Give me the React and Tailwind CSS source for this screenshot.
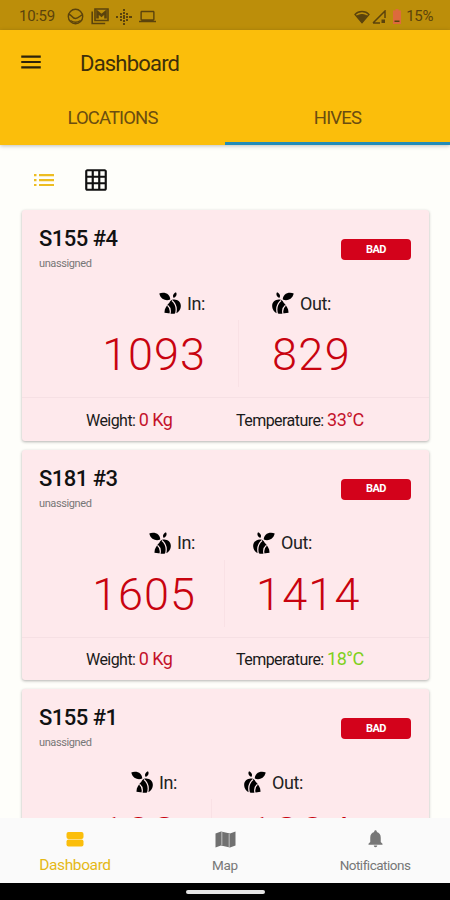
import React from 'react';
import { MdMenu, MdGridOn, MdLaptop, MdNotifications } from 'react-icons/md';

const hives = [
  {
    name: 'S155 #4', incoming: '1093', outgoing: '829', temperature: '33°C', tempClass: 'text-[#c4122b]',
    inClass: 'w-[183px]', leftGap: 'w-[34px]', rightGap: 'w-[33px]', outClass: 'tracking-[1.4px]',
  },
  {
    name: 'S181 #3', incoming: '1605', outgoing: '1414', temperature: '18°C', tempClass: 'text-[#7ed01c]',
    inClass: 'w-[173px]', leftGap: 'w-[30px]', rightGap: 'w-[28px]', outClass: 'tracking-[1.2px] pl-[3px]',
  },
  {
    name: 'S155 #1', incoming: '103', outgoing: '1304', temperature: '33°C', tempClass: 'text-[#c4122b]',
    inClass: 'w-[155px]', leftGap: 'w-[35px]', rightGap: 'w-[32px]', outClass: 'tracking-[1.2px] pl-[4px]',
  },
];

const BeeIcon = ({ className = '' }) => (
  <svg width="22" height="22" viewBox="0 0 22 22" className={className}>
    <path d="M0.300 1.600C2.500.200 7 .300 9.300 2.700 10.800 4.300 11.300 5.900 11.200 7.600 8 9 2 8.600.300 1.600Z" fill="currentColor" />
    <path d="M17 .300C18.300 2 17.600 4.600 14.800 6 13.200 4.500 14 1.600 17 .300Z" fill="currentColor" />
    <path d="M14.500 7.500C19 7.200 22.200 10.500 21.800 14.500 21.500 18.500 18.600 21.500 14.800 21.700 11.500 21.900 8.200 21 5.500 20.700 5.300 17 7.500 13.800 10.500 10.600 11.200 8.800 12.500 7.600 14.500 7.500Z" fill="currentColor" />
    <path d="M8.500 13.200C11.300 15.500 12 18.500 10.800 22.500M13 8.500C17 12 18.300 16 16.500 22" fill="none" stroke="#fee9ec" strokeWidth="1.200" />
  </svg>
);

const ListIcon = () => (
  <svg width="20" height="12" viewBox="0 0 20 12" fill="#edbd22">
    <path d="M0 0h2.500v2.200H0zM0 5h2.500v2.200H0zM0 10h2.500v2H0zM5 0h15v2.200H5zM5 5h15v2.200H5zM5 10h15v2H5z" />
  </svg>
);

const StatusBar = () => (
  <div className="h-[30px] shrink-0 bg-[#bc8e0a] text-[#5b430c] flex items-center justify-between pl-[19px] pr-[17px] pt-[3px]">
    <div className="flex items-center">
      <span className="w-[48px] text-[15px] tracking-[-0.3px]">10:59</span>
      <svg width="17" height="17" viewBox="0 0 17 17" fill="none" stroke="currentColor" strokeWidth="1.400">
        <circle cx="8.500" cy="8.500" r="7.200" />
        <path d="M1.800 6.500C4.500 6 5 10.500 8.500 10.500S13 7 15.500 7M3.500 12.500c3 2 7 2 10 0" />
      </svg>
      <svg width="18" height="17" viewBox="0 0 18 17" className="ml-[7px]" fill="none" stroke="currentColor" strokeWidth="1.600">
        <path d="M1.200 3.500v12h13" />
        <path d="M4 1h13v11.500H4z" />
        <path d="M6.500 10.500V4l4 3.500 4-3.500v6.500" strokeWidth="2.600" />
      </svg>
      <svg width="16" height="16" viewBox="0 0 16 16" className="ml-[7px]" fill="currentColor">
        <path d="M7 0h2v2H7zM7 3h2v2H7zM7 6h2v4H7zM7 11h2v2H7zM7 14h2v2H7zM4 4h2v2H4zM4 7h2v2H4zM4 10h2v2H4zM10 4h2v2h-2zM10 7h2v2h-2zM10 10h2v2h-2zM13 7h3v2h-3zM0 7h2v2H0z" />
      </svg>
      <MdLaptop size={17} className="ml-[7px]" />
    </div>
    <div className="flex items-center">
      <svg width="16" height="14" viewBox="0 0 16 14" fill="none" stroke="currentColor">
        <path d="M1 4.500C4.500.5 11.500.5 15 4.500L8 12.800Z" strokeWidth="1.300" />
        <path d="M3 6c3-2 7-2 10 0l-5 6.500z" fill="currentColor" />
      </svg>
      <svg width="14" height="14" viewBox="0 0 14 14" className="ml-[2px]">
        <path d="M1 13 13 1v7M1 13h7" fill="none" stroke="currentColor" strokeWidth="1.500" />
        <path d="M9.500 9.500h3.500V13H9.500z" fill="currentColor" />
      </svg>
      <svg width="8" height="15" viewBox="0 0 8 15" className="ml-[7px]">
        <path d="M2.500 0h3v1.500H8V15H0V1.500h2.500z" fill="#dd6a3c" />
        <path d="M1.500 11.500h5V13h-5z" fill="#5b430c" />
      </svg>
      <span className="ml-[5px] text-[15px] tracking-[-0.4px]">15%</span>
    </div>
  </div>
);

const Header = () => (
  <header className="h-[115px] shrink-0 bg-[#fbbe0b] shadow-[0_1px_4px_rgba(0,0,0,0.25)] flex flex-col">
    <div className="h-[64px] flex items-center pl-[18px]">
      <MdMenu size={26} className="text-[#2d230a]" />
      <h1 className="ml-[36px] pt-[3px] text-[22px] leading-none tracking-[-0.8px] text-[#3e300a]">Dashboard</h1>
    </div>
    <div className="flex-1 flex text-[18.500px] text-[#6b4d10]">
      <div className="flex-1 flex items-center justify-center tracking-[-0.9px] border-b-[3px] border-transparent pt-[2px]">LOCATIONS</div>
      <div className="flex-1 flex items-center justify-center tracking-[-0.8px] border-b-[3px] border-[#238cb8] pt-[2px]">HIVES</div>
    </div>
  </header>
);

const HiveCard = ({ hive }) => (
  <div className="h-[230.5px] shrink-0 rounded-[3px] bg-[#fee9ec] shadow-[0_1px_3px_rgba(0,0,0,0.3)] flex flex-col">
    <div className="h-[80px] flex justify-between pl-[17px] pr-[18px]">
      <div className="pt-[17px]">
        <h2 className="text-[22px] leading-[24px] tracking-[-0.5px] font-medium text-[#111]">{hive.name}</h2>
        <p className="mt-[6px] text-[11px] leading-[14px] tracking-[-0.4px] text-[#777]">unassigned</p>
      </div>
      <span className="mt-[29px] w-[70px] h-[21px] rounded-[4px] bg-[#d3021b] text-white text-[11px] font-bold tracking-[-0.6px] flex items-center justify-center pt-px">
        BAD
      </span>
    </div>
    <div className="h-[107px] shrink-0 flex">
      <div className={`${hive.inClass} flex flex-col items-end`}>
        <div className="h-[26px] flex items-center gap-[6px] text-[18px] tracking-[-0.4px] text-[#222]">
          <BeeIcon className="text-black" />
          <span>In:</span>
        </div>
        <span className="mt-[13px] -mr-px text-[45px] leading-[52px] tracking-[1px] text-[#c8030f] font-light">{hive.incoming}</span>
      </div>
      <div className={`${hive.leftGap} mt-[30px] mb-[10px] border-r border-[#f9e1e5]`} />
      <div className={`${hive.rightGap} shrink-0`} />
      <div className="flex flex-col items-start">
        <div className="h-[26px] flex items-center gap-[6px] text-[18px] tracking-[-0.4px] text-[#222]">
          <BeeIcon className="text-black -scale-x-100" />
          <span>Out:</span>
        </div>
        <span className={`mt-[13px] text-[45px] leading-[52px] text-[#c8030f] font-light ${hive.outClass}`}>{hive.outgoing}</span>
      </div>
    </div>
    <div className="flex-1 flex items-center border-t border-[#f6e0e4] text-[16px] tracking-[-0.55px] text-[#1a1a1a]">
      <div className="w-[214px] pl-[64px] whitespace-nowrap">
        Weight: <span className="text-[18px] text-[#c4122b]">0 Kg</span>
      </div>
      <div className="whitespace-nowrap">
        Temperature: <span className={`text-[18px] ${hive.tempClass}`}>{hive.temperature}</span>
      </div>
    </div>
  </div>
);

const BottomNav = () => (
  <nav className="h-[65px] shrink-0 bg-[#fafafa] flex text-[#777]">
    <div className="flex-1 flex flex-col items-center text-[#e5b816]">
      <svg width="18" height="16" viewBox="0 0 18 16" className="mt-[14px]" fill="#fbbe0b">
        <rect x="0.500" width="17" height="7" rx="2" />
        <rect x="0.500" y="7.500" width="17" height="7" rx="2" />
      </svg>
      <span className="mt-[8px] text-[15.500px] leading-[18px] tracking-[-0.4px]">Dashboard</span>
    </div>
    <div className="flex-1 flex flex-col items-center">
      <svg width="21" height="17" viewBox="0 0 21 17" className="mt-[13px]">
        <path d="M0.500 2.500 6 .5l9 2 5.500-2v14l-5.500 2-9-2-5.500 2z" fill="#707070" />
        <path d="M6.800 1v13M14.200 3v13" stroke="#b4b4b4" strokeWidth="1.200" />
      </svg>
      <span className="mt-[9px] text-[13.500px] leading-[16px] tracking-[-0.3px]">Map</span>
    </div>
    <div className="flex-1 flex flex-col items-center">
      <MdNotifications size={21} className="mt-[10px]" />
      <span className="mt-[8px] text-[13.500px] leading-[16px] tracking-[-0.5px]">Notifications</span>
    </div>
  </nav>
);

export default function App() {
  return (
    <div className="w-[450px] h-[900px] overflow-hidden flex flex-col bg-[#fefefa] font-['Roboto',sans-serif]">
      <StatusBar />
      <Header />
      <main className="flex-1 min-h-0 overflow-hidden">
        <div className="h-[65px] flex items-center pl-[34px] pt-[4px]">
          <ListIcon />
          <MdGridOn size={26} className="ml-[29px] text-[#111]" />
        </div>
        <div className="flex flex-col gap-[9px] pl-[22px] pr-[21px]">
          {hives.map((hive) => (
            <HiveCard key={hive.name} hive={hive} />
          ))}
        </div>
      </main>
      <BottomNav />
      <div className="h-[17px] shrink-0 bg-black flex items-center justify-center">
        <div className="w-[79px] h-[4px] rounded-full bg-[#e4e4e4]" />
      </div>
    </div>
  );
}
